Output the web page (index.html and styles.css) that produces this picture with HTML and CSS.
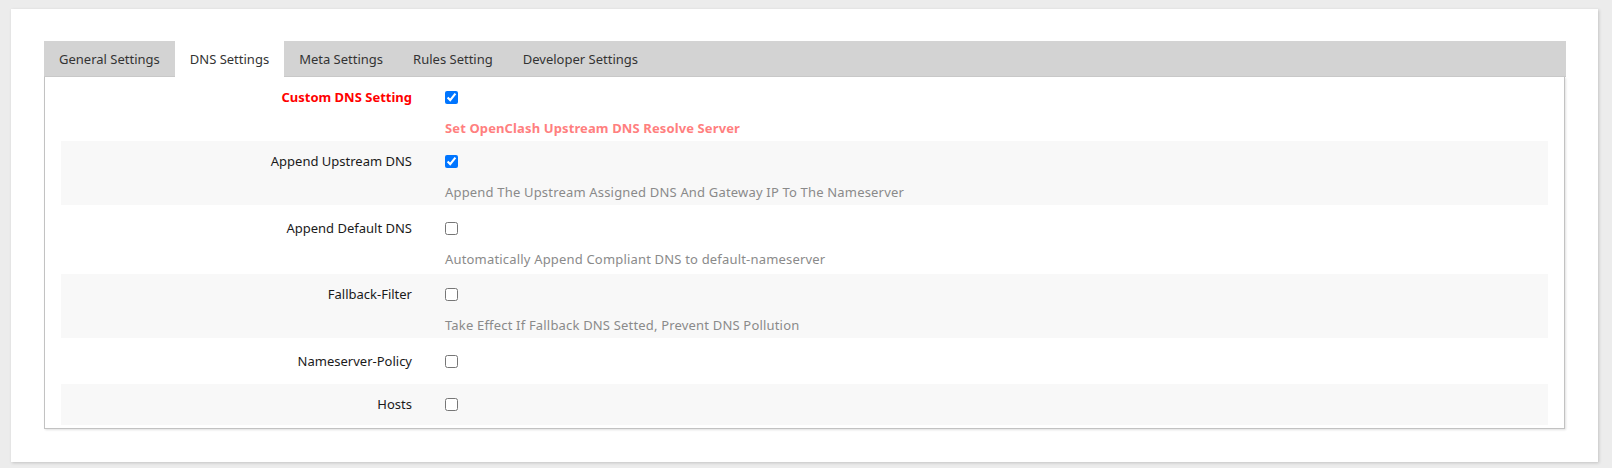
FILE: index.html
```html
<!DOCTYPE html>
<html lang="en">
<head>
<meta charset="utf-8">
<title>OpenClash - DNS Settings</title>
<link rel="stylesheet" href="styles.css">
</head>
<body>
<div class="card">
  <ul class="tabs">
    <li class="tab">General Settings</li>
    <li class="tab tab--active">DNS Settings</li>
    <li class="tab">Meta Settings</li>
    <li class="tab">Rules Setting</li>
    <li class="tab">Developer Settings</li>
  </ul>
  <div class="panel">
    <div class="row">
      <div class="label label--alert">Custom DNS Setting</div>
      <div class="field">
        <div class="control"><input type="checkbox" checked></div>
        <div class="desc desc--alert">Set OpenClash Upstream DNS Resolve Server</div>
      </div>
    </div>
    <div class="row">
      <div class="label">Append Upstream DNS</div>
      <div class="field">
        <div class="control"><input type="checkbox" checked></div>
        <div class="desc">Append The Upstream Assigned DNS And Gateway IP To The Nameserver</div>
      </div>
    </div>
    <div class="row row--loose">
      <div class="label">Append Default DNS</div>
      <div class="field">
        <div class="control"><input type="checkbox"></div>
        <div class="desc">Automatically Append Compliant DNS to default-nameserver</div>
      </div>
    </div>
    <div class="row">
      <div class="label">Fallback-Filter</div>
      <div class="field">
        <div class="control"><input type="checkbox"></div>
        <div class="desc">Take Effect If Fallback DNS Setted, Prevent DNS Pollution</div>
      </div>
    </div>
    <div class="row row--nodesc row--loose">
      <div class="label">Nameserver-Policy</div>
      <div class="field">
        <div class="control"><input type="checkbox"></div>
      </div>
    </div>
    <div class="row row--nodesc">
      <div class="label">Hosts</div>
      <div class="field">
        <div class="control"><input type="checkbox"></div>
      </div>
    </div>
  </div>
</div>
</body>
</html>
```
FILE: styles.css
```css
* { box-sizing: border-box; }

html, body {
  margin: 0;
  height: 100%;
}

body {
  background: #ececec;
  padding: 9px 14px 0 11px;
  font-family: "Noto Sans", "Open Sans", sans-serif;
  font-size: 13px;
  color: #222;
}

.card {
  background: #fff;
  height: 453px;
  padding: 32px 32px 33px 33px;
  box-shadow: 1px 1px 3px rgba(0, 0, 0, 0.18);
}

.tabs {
  list-style: none;
  margin: 0;
  padding: 0;
  display: flex;
  height: 36px;
  background: #d3d3d3;
  border-bottom: 1px solid #cacaca;
}

.tab {
  padding: 0 15px;
  display: flex;
  align-items: center;
  color: #333;
  white-space: nowrap;
}

.tab--active {
  background: #fff;
  margin-bottom: -1px;
}

.panel {
  margin-right: 1px;
  border: 1px solid #c2c2c2;
  border-top: none;
  box-shadow: 1px 1px 2px rgba(0, 0, 0, 0.12);
  padding: 0 16px 3px 16px;
}

.row {
  display: grid;
  grid-template-columns: 351px 1fr;
  column-gap: 33px;
  padding: 11px 0 4px;
  line-height: 18px;
}

.row:nth-child(even) {
  background: #f8f8f8;
}

.row--nodesc {
  padding-bottom: 12px;
}

.row--loose {
  padding-top: 14px;
  padding-bottom: 6px;
}

.row--loose.row--nodesc {
  padding-bottom: 14px;
}

.label {
  text-align: right;
  color: #1a1a1a;
}

.label--alert {
  color: #f00;
  font-weight: 700;
}

.field {
  display: flex;
  flex-direction: column;
}

.control {
  height: 18px;
  display: flex;
  align-items: center;
}

.control input {
  margin: 0;
  width: 13px;
  height: 13px;
}

.desc {
  margin-top: 13px;
  color: #8a8a8a;
  letter-spacing: 0.18px;
}

.desc--alert {
  color: #ff7f7f;
  font-weight: 700;
  letter-spacing: 0.12px;
}
```
